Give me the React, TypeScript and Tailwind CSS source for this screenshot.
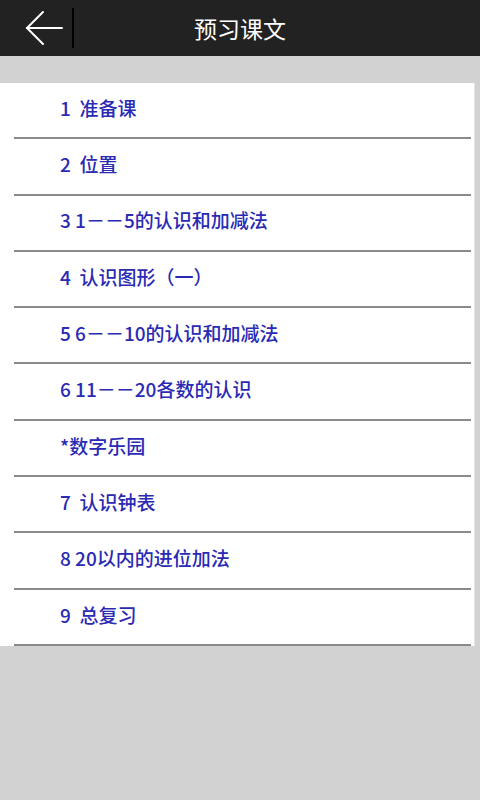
import React from 'react'

const lessons = [
  '1  准备课',
  '2  位置',
  '3 1－－5的认识和加减法',
  '4  认识图形（一）',
  '5 6－－10的认识和加减法',
  '6 11－－20各数的认识',
  '*数字乐园',
  '7  认识钟表',
  '8 20以内的进位加法',
  '9  总复习',
]

function BackArrow() {
  return (
    <svg width="40" height="36" viewBox="0 0 40 36" fill="none" stroke="#fff" strokeWidth="2" strokeLinecap="round">
      <path d="M38 18H3" />
      <path d="M19 2L3 18L19 34" />
    </svg>
  )
}

export default function App() {
  return (
    <div
      className="w-[480px] h-[800px] bg-[#d2d2d2] flex flex-col"
      style={{ fontFamily: '"Noto Sans CJK SC", "Noto Sans", sans-serif' }}
    >
      <div className="h-[56px] bg-[#222222] flex items-center relative shrink-0">
        <div className="w-[72px] h-full flex items-center pl-[24px]">
          <BackArrow />
        </div>
        <div className="w-[2px] h-[40px] bg-black" />
        <div className="absolute inset-0 flex items-center justify-center text-white text-[23px] pointer-events-none">
          预习课文
        </div>
      </div>
      <div className="h-[27px] shrink-0" />
      <div className="bg-white w-[475px] border-r border-[#e4e4e4]">
        {lessons.map((t) => (
          <div key={t} className="h-[56.3px] flex flex-col">
            <div className="flex-1 flex items-center pl-[60px] pb-[4px] text-[#2a2ab4] text-[19px] font-medium whitespace-pre">
              {t}
            </div>
            <div className="ml-[14px] mr-[3px] h-[2px] bg-[#8a8a8a]" />
          </div>
        ))}
      </div>
    </div>
  )
}
